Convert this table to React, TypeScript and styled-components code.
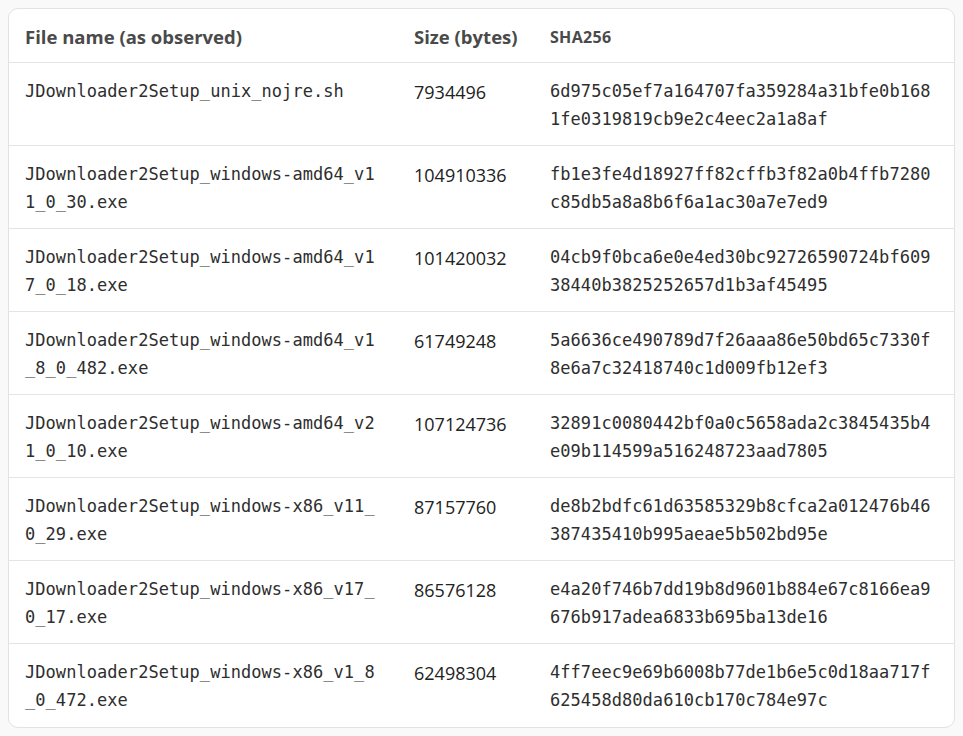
import React from "react";
import styled, { createGlobalStyle } from "styled-components";

const Global = createGlobalStyle`
  html, body { margin: 0; padding: 0; background: #f9f9f9; }
  body { padding: 8px; font-family: "Open Sans", "Noto Sans", sans-serif; }
  * { box-sizing: border-box; }
`;

const Card = styled.div`
  background: #ffffff;
  border: 1px solid #e2e2e2;
  border-radius: 10px;
  overflow: hidden;
  width: 947px;
`;

const Row = styled.div<{ $head?: boolean; $last?: boolean }>`
  display: grid;
  grid-template-columns: 389px 136px 1fr;
  border-bottom: ${(p) => (p.$last ? "none" : "1px solid #e4e4e4")};
  height: ${(p) => (p.$head ? "54px" : "83px")};
`;

const HeadCell = styled.div<{ $small?: boolean }>`
  padding: 14px 16px 12px;
  line-height: 28px;
  font-weight: 700;
  font-size: ${(p) => (p.$small ? "16px" : "18.5px")};
  letter-spacing: ${(p) => (p.$small ? "0.3px" : "0")};
  color: #4a4a4a;
  white-space: nowrap;
`;

const CodeCell = styled.div`
  padding: 14px 16px 12px;
  font-family: "DejaVu Sans Mono", "Liberation Mono", monospace;
  font-size: 17px;
  line-height: 28px;
  color: #2e2e2e;
  word-break: break-all;
  letter-spacing: 0.05px;
`;

const NumCell = styled.div`
  padding: 14px 16px 12px;
  font-size: 18px;
  line-height: 30px;
  color: #222;
`;

const rows: [string, string, string][] = [
  ["JDownloader2Setup_unix_nojre.sh", "7934496", "6d975c05ef7a164707fa359284a31bfe0b1681fe0319819cb9e2c4eec2a1a8af"],
  ["JDownloader2Setup_windows-amd64_v11_0_30.exe", "104910336", "fb1e3fe4d18927ff82cffb3f82a0b4ffb7280c85db5a8a8b6f6a1ac30a7e7ed9"],
  ["JDownloader2Setup_windows-amd64_v17_0_18.exe", "101420032", "04cb9f0bca6e0e4ed30bc92726590724bf60938440b3825252657d1b3af45495"],
  ["JDownloader2Setup_windows-amd64_v1_8_0_482.exe", "61749248", "5a6636ce490789d7f26aaa86e50bd65c7330f8e6a7c32418740c1d009fb12ef3"],
  ["JDownloader2Setup_windows-amd64_v21_0_10.exe", "107124736", "32891c0080442bf0a0c5658ada2c3845435b4e09b114599a516248723aad7805"],
  ["JDownloader2Setup_windows-x86_v11_0_29.exe", "87157760", "de8b2bdfc61d63585329b8cfca2a012476b46387435410b995aeae5b502bd95e"],
  ["JDownloader2Setup_windows-x86_v17_0_17.exe", "86576128", "e4a20f746b7dd19b8d9601b884e67c8166ea9676b917adea6833b695ba13de16"],
  ["JDownloader2Setup_windows-x86_v1_8_0_472.exe", "62498304", "4ff7eec9e69b6008b77de1b6e5c0d18aa717f625458d80da610cb170c784e97c"],
];

export default function App() {
  return (
    <>
      <Global />
      <Card>
        <Row $head>
          <HeadCell>File name (as observed)</HeadCell>
          <HeadCell>Size (bytes)</HeadCell>
          <HeadCell $small>SHA256</HeadCell>
        </Row>
        {rows.map(([name, size, hash], i) => (
          <Row key={name} $last={i === rows.length - 1}>
            <CodeCell>{name}</CodeCell>
            <NumCell>{size}</NumCell>
            <CodeCell>{hash}</CodeCell>
          </Row>
        ))}
      </Card>
    </>
  );
}
